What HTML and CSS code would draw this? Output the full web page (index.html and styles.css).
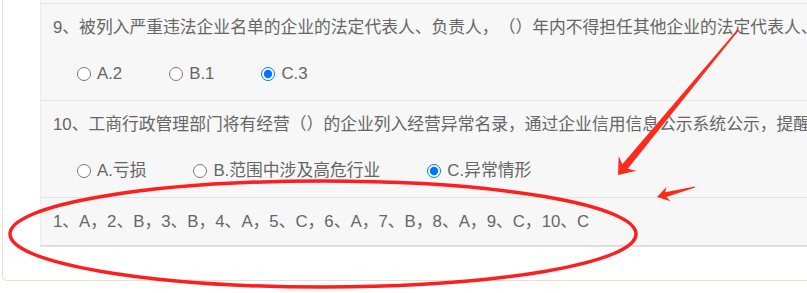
FILE: index.html
```html
<!DOCTYPE html>
<html lang="zh-CN">
<head>
<meta charset="utf-8">
<title>答题</title>
<link rel="stylesheet" href="styles.css">
</head>
<body>
<div class="card">
  <div class="panel">
    <div class="row">
      <div class="question">9、被列入严重违法企业名单的企业的法定代表人、负责人，（）年内不得担任其他企业的法定代表人、负责人。</div>
      <div class="options">
        <label class="opt"><input type="radio" name="q9"><span>A.2</span></label>
        <label class="opt"><input type="radio" name="q9"><span>B.1</span></label>
        <label class="opt"><input type="radio" name="q9" checked><span>C.3</span></label>
      </div>
    </div>
    <div class="row">
      <div class="question">10、工商行政管理部门将有经营（）的企业列入经营异常名录，通过企业信用信息公示系统公示，提醒其履行公示义务。</div>
      <div class="options">
        <label class="opt"><input type="radio" name="q10"><span>A.亏损</span></label>
        <label class="opt"><input type="radio" name="q10"><span>B.范围中涉及高危行业</span></label>
        <label class="opt"><input type="radio" name="q10" checked><span>C.异常情形</span></label>
      </div>
    </div>
    <div class="row answers">1、A，2、B，3、B，4、A，5、C，6、A，7、B，8、A，9、C，10、C</div>
  </div>
</div>
<svg class="marks" width="807" height="293" viewBox="0 0 807 293" xmlns="http://www.w3.org/2000/svg">
  <ellipse cx="323" cy="234" rx="313" ry="53" fill="none" stroke="#ff1d1d" stroke-width="3.5"/>
  <polygon fill="#ff2a1a" points="618,175 636.4,170.8 627.7,168.7 738.6,30.5 737.4,29.5 622.3,164.3 618.7,156.1"/>
  <polygon fill="#ff2a1a" points="657,197 670.5,201.2 666.3,197.1 695.15,187.6 694.85,186.4 665.1,192.3 666.7,186.7"/>
</svg>
</body>
</html>
```

FILE: styles.css
```css
html, body {
  margin: 0;
  padding: 0;
  background: #ffffff;
}

body {
  position: relative;
  width: 807px;
  height: 293px;
  overflow: hidden;
  font-family: "Liberation Sans", "Noto Sans CJK SC", sans-serif;
  font-size: 16.8px;
  color: #666666;
  text-spacing-trim: space-all;
}

.card {
  width: 900px;
  margin-left: 2px;
  padding: 0 0 33px 37px;
  border-left: 1px solid #e6e1d7;
  border-bottom: 1px solid #e6e1d7;
  border-bottom-left-radius: 5px;
  background: #ffffff;
}

.panel {
  padding-top: 3px;
  background: #f7f7f7;
  border-left: 1px solid #ececec;
  border-bottom: 2px solid #dedede;
}

.row {
  padding: 12px 12px 14px;
  border-top: 1px solid #e3e3e3;
}

.question {
  line-height: 24px;
  white-space: nowrap;
}

.options {
  display: flex;
  align-items: center;
  gap: 47px;
  margin-top: 22px;
  padding-left: 24px;
  line-height: 24px;
}

.opt {
  display: flex;
  align-items: center;
  gap: 6px;
  white-space: nowrap;
}

.opt input {
  width: 14px;
  height: 14px;
  margin: 0;
}

.answers {
  padding-bottom: 11px;
  line-height: 24px;
  white-space: nowrap;
}

.marks {
  position: absolute;
  left: 0;
  top: 0;
  pointer-events: none;
}
```
